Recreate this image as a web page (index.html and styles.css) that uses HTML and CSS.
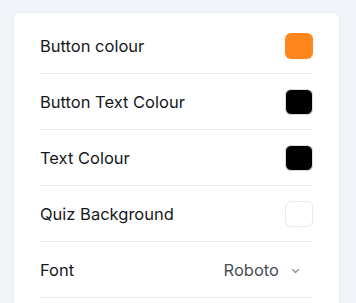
FILE: index.html
```html
<!DOCTYPE html>
<html lang="en">
<head>
    <meta charset="UTF-8">
    <meta name="viewport" content="width=device-width, initial-scale=1.0">
    <title>Quiz Appearance</title>
    <link rel="stylesheet" href="styles.css">
</head>
<body>
    <div class="settings-card">
        <div class="setting-row">
            <span class="setting-label">Button colour</span>
            <span class="swatch swatch-orange"></span>
        </div>
        <div class="setting-row">
            <span class="setting-label">Button Text Colour</span>
            <span class="swatch swatch-black"></span>
        </div>
        <div class="setting-row">
            <span class="setting-label">Text Colour</span>
            <span class="swatch swatch-black"></span>
        </div>
        <div class="setting-row">
            <span class="setting-label">Quiz Background</span>
            <span class="swatch swatch-white"></span>
        </div>
        <div class="setting-row">
            <span class="setting-label">Font</span>
            <span class="font-select">
                Roboto
                <svg class="chevron" width="9" height="6" viewBox="0 0 9 6">
                    <path d="M1.5 1.5 L4.5 4.5 L7.5 1.5" fill="none" stroke="#8a9099" stroke-width="1.3" stroke-linecap="round" stroke-linejoin="round"/>
                </svg>
            </span>
        </div>
    </div>
</body>
</html>
```

FILE: styles.css
```css
body {
    font-family: Inter, "Noto Sans", Arial, sans-serif;
    margin: 0;
    padding: 13px 17px 0 14px;
    background: #f1f4f8;
    height: 303px;
    box-sizing: border-box;
    overflow: hidden;
}
.settings-card {
    background: #fff;
    border-radius: 6px;
    box-shadow: 0 1px 4px rgba(30, 40, 60, 0.05);
    padding: 5px 26px 40px 26px;
}
.setting-row {
    display: flex;
    justify-content: space-between;
    align-items: center;
    height: 56px;
    box-sizing: border-box;
    border-bottom: 1px solid #eceef1;
}
.setting-label {
    font-size: 16.5px;
    color: #16181d;
}
.swatch {
    width: 28px;
    height: 26px;
    border-radius: 6px;
    box-sizing: border-box;
}
.swatch-orange {
    background: #ff861d;
}
.swatch-black {
    background: #000;
    border: 1px solid #d8dbe0;
}
.swatch-white {
    background: #fff;
    border: 1px solid #e7e9ec;
}
.font-select {
    display: flex;
    align-items: center;
    gap: 12px;
    font-size: 16.5px;
    color: #4a4f58;
    padding-right: 13px;
}
.chevron {
    margin-top: 2px;
}
```
